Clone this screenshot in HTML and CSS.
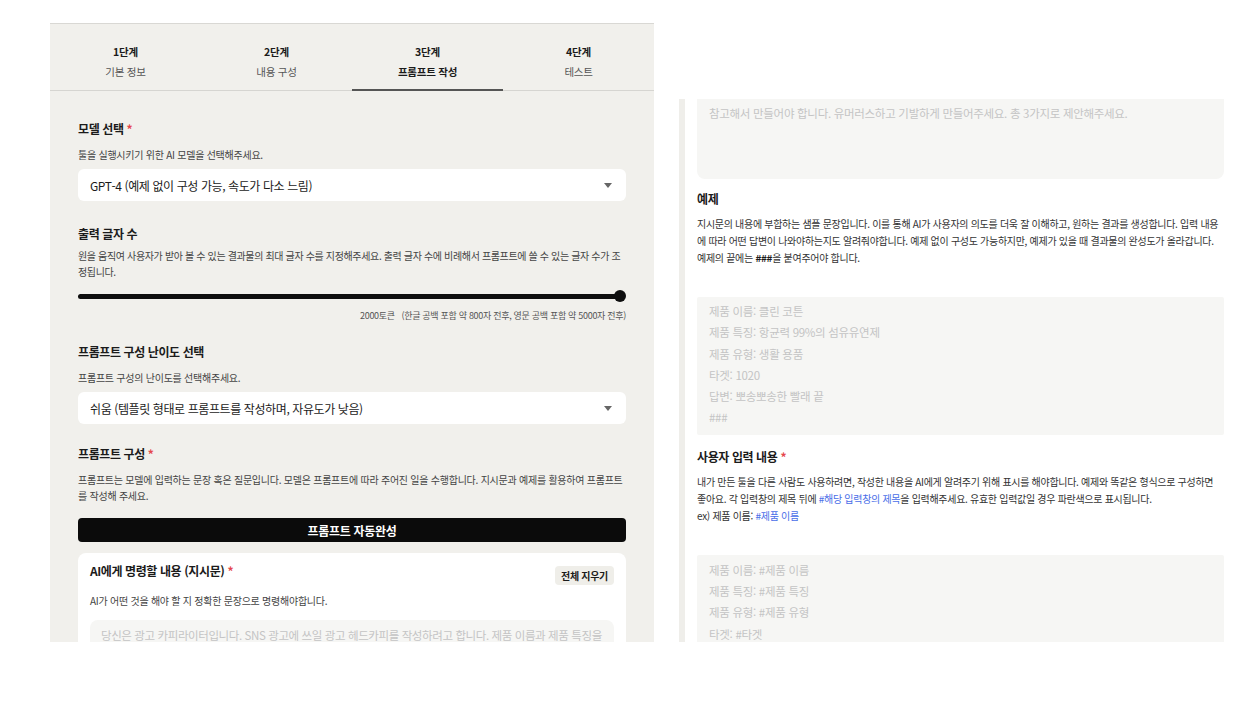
FILE: index.html
```html
<!DOCTYPE html>
<html lang="ko">
<head>
<meta charset="utf-8">
<title>프롬프트 작성</title>
<link rel="stylesheet" href="styles.css">
</head>
<body>
<div class="page">
  <section class="left">
    <nav class="tabs">
      <div class="tab"><span class="tab-step">1단계</span><span class="tab-name">기본 정보</span></div>
      <div class="tab"><span class="tab-step">2단계</span><span class="tab-name">내용 구성</span></div>
      <div class="tab active"><span class="tab-step">3단계</span><span class="tab-name">프롬프트 작성</span></div>
      <div class="tab"><span class="tab-step">4단계</span><span class="tab-name">테스트</span></div>
    </nav>
    <div class="form">
      <div class="field">
        <h3 class="label">모델 선택 <span class="req">*</span></h3>
        <p class="desc">툴을 실행시키기 위한 AI 모델을 선택해주세요.</p>
        <div class="select"><span>GPT-4 (예제 없이 구성 가능, 속도가 다소 느림)</span><i class="caret"></i></div>
      </div>
      <div class="field field-slider">
        <h3 class="label">출력 글자 수</h3>
        <p class="desc desc-slider">원을 움직여 사용자가 받아 볼 수 있는 결과물의 최대 글자 수를 지정해주세요. 출력 글자 수에 비례해서 프롬프트에 쓸 수 있는 글자 수가 조정됩니다.</p>
        <div class="slider"><div class="track"></div><div class="thumb"></div></div>
        <p class="slider-cap">2000토큰&nbsp;&nbsp;&nbsp;(한글 공백 포함 약 800자 전후, 영문 공백 포함 약 5000자 전후)</p>
      </div>
      <div class="field field-level">
        <h3 class="label">프롬프트 구성 난이도 선택</h3>
        <p class="desc">프롬프트 구성의 난이도를 선택해주세요.</p>
        <div class="select"><span>쉬움 (템플릿 형태로 프롬프트를 작성하며, 자유도가 낮음)</span><i class="caret"></i></div>
      </div>
      <div class="field">
        <h3 class="label">프롬프트 구성 <span class="req">*</span></h3>
        <p class="desc desc-prompt">프롬프트는 모델에 입력하는 문장 혹은 질문입니다. 모델은 프롬프트에 따라 주어진 일을 수행합니다. 지시문과 예제를 활용하여 프롬프트를 작성해 주세요.</p>
        <button class="auto-btn">프롬프트 자동완성</button>
        <div class="card">
          <div class="card-head">
            <h3 class="label">AI에게 명령할 내용 (지시문) <span class="req">*</span></h3>
            <button class="clear-btn">전체 지우기</button>
          </div>
          <p class="desc card-desc">AI가 어떤 것을 해야 할 지 정확한 문장으로 명령해야합니다.</p>
          <div class="textarea">당신은 광고 카피라이터입니다. SNS 광고에 쓰일 광고 헤드카피를 작성하려고 합니다. 제품 이름과 제품 특징을</div>
        </div>
      </div>
    </div>
  </section>

  <section class="right">
    <div class="right-inner">
      <div class="box box-tail">참고해서 만들어야 합니다. 유머러스하고 기발하게 만들어주세요. 총 3가지로 제안해주세요.</div>
      <h3 class="label r-label">예제</h3>
      <p class="desc r-desc">지시문의 내용에 부합하는 샘플 문장입니다. 이를 통해 AI가 사용자의 의도를 더욱 잘 이해하고, 원하는 결과를 생성합니다. 입력 내용에 따라 어떤 답변이 나와야하는지도 알려줘야합니다. 예제 없이 구성도 가능하지만, 예제가 있을 때 결과물의 완성도가 올라갑니다. 예제의 끝에는 <b>###</b>을 붙여주어야 합니다.</p>
      <div class="box box-lines">
        <p>제품 이름: 클린 코튼</p>
        <p>제품 특징: 항균력 99%의 섬유유연제</p>
        <p>제품 유형: 생활 용품</p>
        <p>타겟: 1020</p>
        <p>답변: 뽀송뽀송한 빨래 끝</p>
        <p>###</p>
      </div>
      <h3 class="label r-label2">사용자 입력 내용 <span class="req">*</span></h3>
      <p class="desc r-desc">내가 만든 툴을 다른 사람도 사용하려면, 작성한 내용을 AI에게 알려주기 위해 표시를 해야합니다. 예제와 똑같은 형식으로 구성하면 좋아요. 각 입력창의 제목 뒤에 <span class="link">#해당 입력창의 제목</span>을 입력해주세요. 유효한 입력값일 경우 파란색으로 표시됩니다.<br>ex) 제품 이름: <span class="link">#제품 이름</span></p>
      <div class="box box-lines box-user">
        <p>제품 이름: #제품 이름</p>
        <p>제품 특징: #제품 특징</p>
        <p>제품 유형: #제품 유형</p>
        <p>타겟: #타겟</p>
        <p>답변: #답변</p>
      </div>
    </div>
  </section>
</div>
</body>
</html>
```

FILE: styles.css
```css
* { box-sizing: border-box; }
html, body { margin: 0; padding: 0; background: #ffffff; }
body {
  font-family: "Noto Sans CJK KR", "Noto Sans", sans-serif;
  color: #1b1b1b;
  letter-spacing: -0.25px;
  width: 1259px;
  height: 706px;
  overflow: hidden;
}
p, h3 { margin: 0; }
.page {
  display: flex;
  align-items: flex-start;
  padding-left: 50px;
  gap: 25px;
}

/* left panel */
.left {
  width: 604px;
  height: 619px;
  margin-top: 23px;
  background: #f1f0ec;
  border-top: 1px solid #d9d8d4;
  overflow: hidden;
  flex-shrink: 0;
}
.tabs {
  display: grid;
  grid-template-columns: repeat(4, 1fr);
  height: 67px;
  border-bottom: 1px solid #d6d5d1;
}
.tab {
  display: flex;
  flex-direction: column;
  align-items: center;
  padding-top: 21px;
  gap: 6px;
  position: relative;
}
.tab-step { font-size: 10.5px; font-weight: 700; line-height: 14px; color: #1b1b1b; }
.tab-name { font-size: 10.5px; line-height: 14px; color: #555; }
.tab.active .tab-name { color: #1b1b1b; font-weight: 700; }
.tab.active::after {
  content: "";
  position: absolute;
  left: 0; right: 0; bottom: -1px;
  height: 2px;
  background: #555;
}
.form { padding: 29px 28px 0 28px; }
.field { margin-bottom: 24px; }
.field-slider { margin-bottom: 21px; }
.field-level { margin-bottom: 21px; }
.label {
  font-size: 12px;
  font-weight: 700;
  line-height: 17px;
  color: #1b1b1b;
  letter-spacing: -0.4px;
}
.req { color: #e5484d; font-weight: 700; }
.desc {
  font-size: 10px;
  line-height: 16px;
  color: #444;
  margin-top: 10px;
}
.desc-slider { margin-top: 6px; letter-spacing: -0.36px; }
.desc-prompt { margin-top: 10px; }
.select {
  margin-top: 6px;
  height: 32px;
  background: #fff;
  border-radius: 6px;
  display: flex;
  align-items: center;
  justify-content: space-between;
  padding: 0 14px 0 12px;
  font-size: 12px;
  letter-spacing: -0.4px;
  color: #1b1b1b;
}
.caret {
  width: 0; height: 0;
  border-left: 4px solid transparent;
  border-right: 4px solid transparent;
  border-top: 5px solid #666;
}
.slider {
  position: relative;
  height: 12px;
  margin-top: 10px;
}
.track {
  position: absolute;
  left: 0; right: 4px; top: 4px;
  height: 5px;
  background: #0e0e0e;
  border-radius: 3px;
}
.thumb {
  position: absolute;
  right: 0; top: 0;
  width: 12px; height: 12px;
  border-radius: 50%;
  background: #0e0e0e;
}
.slider-cap {
  text-align: right;
  font-size: 9px;
  line-height: 12px;
  color: #555;
  margin-top: 8px;
  letter-spacing: -0.3px;
}
.auto-btn {
  display: block;
  width: 100%;
  height: 24px;
  margin-top: 14px;
  border: none;
  border-radius: 4px;
  background: #0b0b0b;
  color: #fff;
  font-family: inherit;
  font-size: 12px;
  font-weight: 700;
  letter-spacing: -0.3px;
}
.card {
  margin-top: 11px;
  background: #fff;
  border-radius: 8px;
  padding: 9px 12px 20px 12px;
}
.card-head {
  display: flex;
  justify-content: space-between;
  align-items: flex-start;
}
.clear-btn {
  margin-top: 4px;
  height: 19px;
  padding: 0 6px;
  border: none;
  border-radius: 4px;
  background: #efeee9;
  font-family: inherit;
  font-size: 10px;
  font-weight: 700;
  color: #1b1b1b;
  letter-spacing: -0.3px;
}
.card-desc { margin-top: 8px; }
.textarea {
  margin-top: 11px;
  background: #f6f6f4;
  border-radius: 8px;
  padding: 7px 11px;
  font-size: 11.5px;
  line-height: 17px;
  letter-spacing: -0.4px;
  color: #c4c4c4;
  height: 80px;
}

/* right panel */
.right {
  width: 545px;
  height: 543px;
  margin-top: 99px;
  overflow: hidden;
  border-left: 6px solid #efeeea;
  flex-shrink: 0;
}
.right-inner { padding-left: 12px; }
.box {
  background: #f6f6f4;
  color: #c4c4c4;
  font-size: 11.5px;
  letter-spacing: -0.3px;
}
.box-tail {
  height: 80px;
  border-radius: 0 0 8px 8px;
  padding: 6px 12px;
  line-height: 17px;
}
.r-label { margin-top: 11px; }
.r-desc {
  margin-top: 8px;
  font-size: 10px;
  line-height: 17px;
  color: #333;
  letter-spacing: -0.3px;
}
.r-desc b { font-weight: 700; color: #1b1b1b; }
.link { color: #4a6ee8; }
.box-lines {
  margin-top: 31px;
  padding: 4px 12px 6px 12px;
  border-radius: 2px;
}
.box-lines p { line-height: 21.3px; }
.r-label2 { margin-top: 13px; }
.box-user { margin-top: 31px; padding-top: 5px; }
```
